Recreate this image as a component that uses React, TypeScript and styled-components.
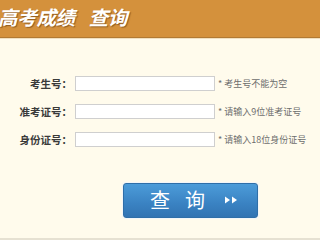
import React from 'react';
import styled, { createGlobalStyle } from 'styled-components';

const Global = createGlobalStyle`
  html, body {
    margin: 0;
    padding: 0;
    background: #fffbec;
  }
  body {
    width: 320px;
    height: 240px;
    overflow: hidden;
    font-family: "Noto Sans CJK SC", "Liberation Sans", sans-serif;
  }
`;

const Page = styled.div`
  display: flex;
  flex-direction: column;
  width: 320px;
  height: 240px;
  box-sizing: border-box;
  background: #fffbec;
  border-bottom: 2px solid #e6e1d2;
`;

const Header = styled.header`
  display: flex;
  align-items: center;
  height: 37px;
  background: #d4913c;
  border-bottom: 1px solid #b27a33;
  box-shadow: 0 1px 0 #f1e0c0;
`;

const Title = styled.h1`
  display: flex;
  gap: 14px;
  margin: 0 0 4px -2px;
  font-size: 19.5px;
  font-weight: 700;
  font-style: italic;
  letter-spacing: -0.3px;
  color: #ffffff;
  white-space: nowrap;
  text-shadow: 1px 1px 1px rgba(90, 50, 10, 0.55);
`;

const Form = styled.form`
  display: flex;
  flex-direction: column;
  gap: 13px;
  margin-top: 38px;
`;

const Row = styled.div`
  display: grid;
  grid-template-columns: 72px 140px auto;
  align-items: center;
  column-gap: 3px;
  height: 15px;
`;

const Label = styled.label`
  text-align: right;
  font-size: 10.5px;
  font-weight: 700;
  color: #3a3a3a;
  white-space: nowrap;
`;

const Input = styled.input`
  box-sizing: border-box;
  width: 140px;
  height: 15px;
  margin: 0;
  padding: 0 3px;
  border: 1px solid #cfcfcf;
  background: #ffffff;
  outline: none;
`;

const Hint = styled.span`
  font-size: 9px;
  color: #6d6d6d;
  white-space: nowrap;
`;

const ButtonRow = styled.div`
  display: flex;
  margin: 36px 0 0 123px;
`;

const Submit = styled.button`
  display: flex;
  align-items: center;
  justify-content: flex-start;
  gap: 15px;
  width: 135px;
  height: 35px;
  padding: 0 0 2px 26px;
  border: 1px solid #2f6fa8;
  border-radius: 3px;
  background: linear-gradient(#4c9cd9, #3a82c2 60%, #3274b2);
  box-shadow: 0 0 0 1px #f3f6f8;
  color: #ffffff;
  font-family: "Noto Sans CJK SC", sans-serif;
  font-size: 20px;
  font-weight: 400;
  cursor: pointer;
`;

const Arrows = () => (
  <svg width="18" height="10" viewBox="0 0 18 10" aria-hidden style={{ marginLeft: 2 }}>
    <path d="M3 1.5 L8 5 L3 8.5 Z" fill="#ffffff" />
    <path d="M10 1.5 L15 5 L10 8.5 Z" fill="#ffffff" />
  </svg>
);

const fields = [
  { label: '考生号：', hint: '* 考生号不能为空' },
  { label: '准考证号：', hint: '* 请输入9位准考证号' },
  { label: '身份证号：', hint: '* 请输入18位身份证号' },
];

export default function App() {
  return (
    <>
      <Global />
      <Page>
        <Header>
          <Title>
            <span>高考成绩</span>
            <span>查询</span>
          </Title>
        </Header>
        <Form onSubmit={(e) => e.preventDefault()}>
          {fields.map((f) => (
            <Row key={f.label}>
              <Label>{f.label}</Label>
              <Input type="text" />
              <Hint>{f.hint}</Hint>
            </Row>
          ))}
        </Form>
        <ButtonRow>
          <Submit type="button">
            <span>查</span>
            <span>询</span>
            <Arrows />
          </Submit>
        </ButtonRow>
      </Page>
    </>
  );
}
